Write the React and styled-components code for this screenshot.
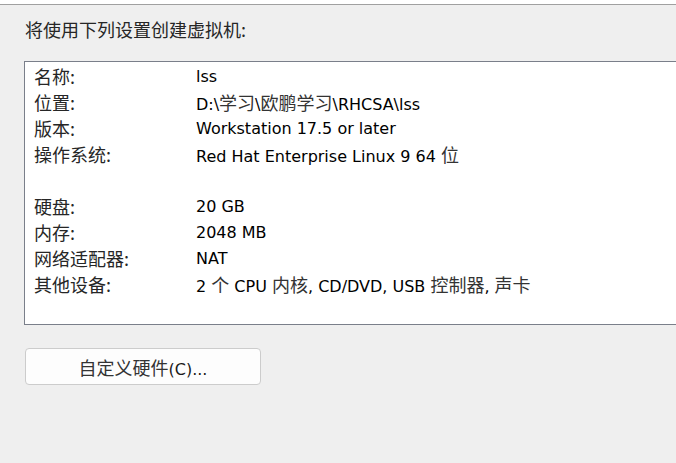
import React from "react";
import styled, { createGlobalStyle } from "styled-components";

const Global = createGlobalStyle`
  html, body {
    margin: 0;
    padding: 0;
    background: #ffffff;
  }
  body {
    font-family: "DejaVu Sans", "Noto Sans CJK SC", sans-serif;
    color: #000;
  }
`;

const Page = styled.div`
  width: 676px;
  height: 463px;
  overflow: hidden;
  padding-top: 4px;
  box-sizing: border-box;
`;

const Panel = styled.div`
  height: 459px;
  background: #efefef;
  border-top: 1px solid #a0a0a0;
  box-sizing: border-box;
  padding: 13px 0 0 24px;
  display: flex;
  flex-direction: column;
`;

const Title = styled.div`
  font-family: "Noto Sans CJK SC", sans-serif;
  font-size: 18px;
  line-height: 22px;
  color: #262626;
  padding-left: 1px;
`;

const Summary = styled.div`
  margin-top: 21px;
  width: 680px;
  height: 264px;
  box-sizing: border-box;
  background: #ffffff;
  border: 1px solid #7a7f8a;
  padding: 1px 0 0 9px;
`;

const Row = styled.div`
  display: grid;
  grid-template-columns: 162px 1fr;
  height: 26px;
  align-items: center;
  white-space: nowrap;
`;

const Label = styled.span`
  font-family: "Noto Sans CJK SC", sans-serif;
  font-size: 18px;
  color: #262626;
`;

const Value = styled.span`
  font-size: 16px;
  color: #000;
`;

const Cjk = styled.span`
  font-family: "Noto Sans CJK SC", sans-serif;
  font-size: 18px;
  color: #333;
`;

const Gap = styled.div`
  height: 26px;
`;

const Button = styled.button`
  margin-top: 23px;
  width: 236px;
  height: 37px;
  margin-left: 1px;
  background: #fdfdfd;
  border: 1px solid #cccccc;
  border-radius: 4px;
  font-family: "DejaVu Sans", "Noto Sans CJK SC", sans-serif;
  font-size: 16px;
  color: #1a1a1a;
  padding: 0;
`;

const rows1 = [
  ["名称:", "lss"],
  ["位置:", "D:\\学习\\欧鹏学习\\RHCSA\\lss"],
  ["版本:", "Workstation 17.5 or later"],
  ["操作系统:", "Red Hat Enterprise Linux 9 64 位"],
];

const rows2 = [
  ["硬盘:", "20 GB"],
  ["内存:", "2048 MB"],
  ["网络适配器:", "NAT"],
  ["其他设备:", "2 个 CPU 内核, CD/DVD, USB 控制器, 声卡"],
];

// split mixed text so the chinese runs get the wider cjk face
function Mixed({ text }) {
  const parts = text.split(/([\u4e00-\u9fff]+)/);
  return parts.map((p, i) =>
    /[\u4e00-\u9fff]/.test(p) ? <Cjk key={i}>{p}</Cjk> : p
  );
}

export default function App() {
  return (
    <Page>
      <Global />
      <Panel>
        <Title>将使用下列设置创建虚拟机:</Title>
        <Summary>
          {rows1.map(([k, v]) => (
            <Row key={k}>
              <Label>{k}</Label>
              <Value><Mixed text={v} /></Value>
            </Row>
          ))}
          <Gap />
          {rows2.map(([k, v]) => (
            <Row key={k}>
              <Label>{k}</Label>
              <Value><Mixed text={v} /></Value>
            </Row>
          ))}
        </Summary>
        <Button><Mixed text="自定义硬件(C)..." /></Button>
      </Panel>
    </Page>
  );
}
